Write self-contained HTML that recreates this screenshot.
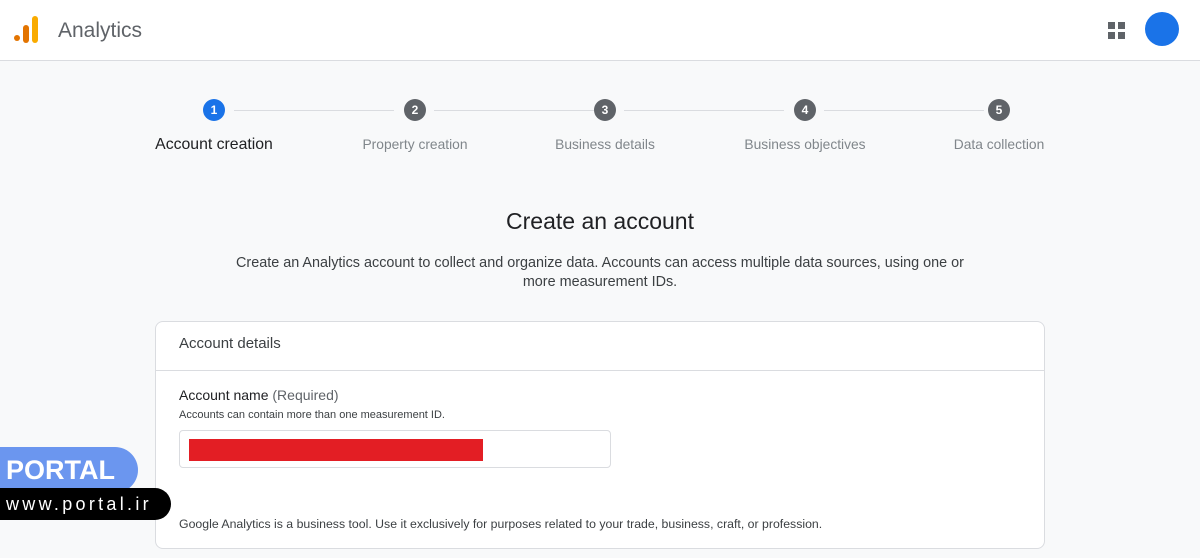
<!DOCTYPE html><html><head><style>
body{margin:0;width:1200px;height:558px;background:#f8f9fa;font-family:"Liberation Sans",Arial,sans-serif;position:relative;overflow:hidden;color:#3c4043}
.hdr{position:absolute;left:0;top:0;width:1200px;height:60px;background:#fff;border-bottom:1px solid #dadce0}
.a{position:absolute}
.step{position:absolute;top:99px;width:22px;height:22px;border-radius:50%;background:#5f6368;color:#fff;font-size:12px;text-align:center;line-height:22px;font-weight:bold}
.lbl{position:absolute;top:137px;font-size:14px;color:#80868b;white-space:nowrap;transform:translateX(-50%)}
.line{position:absolute;top:110px;height:1px;background:#dadce0}
</style></head><body>
<div class="hdr">
<div class="a" style="left:14px;top:35px;width:6px;height:6px;border-radius:50%;background:#e37400"></div>
<div class="a" style="left:23px;top:25px;width:6px;height:18px;border-radius:3px;background:#e37400"></div>
<div class="a" style="left:32px;top:16px;width:6px;height:27px;border-radius:3px;background:#f9ab00"></div>
<div class="a" style="left:58px;top:19px;font-size:21px;color:#5f6368">Analytics</div>
<div class="a" style="left:1108px;top:22px;width:7px;height:7px;background:#5f6368"></div>
<div class="a" style="left:1118px;top:22px;width:7px;height:7px;background:#5f6368"></div>
<div class="a" style="left:1108px;top:32px;width:7px;height:7px;background:#5f6368"></div>
<div class="a" style="left:1118px;top:32px;width:7px;height:7px;background:#5f6368"></div>
<div class="a" style="left:1145px;top:12px;width:34px;height:34px;border-radius:50%;background:#1a73e8"></div>
</div>
<div class="line" style="left:234px;width:160px"></div>
<div class="line" style="left:434px;width:160px"></div>
<div class="line" style="left:624px;width:160px"></div>
<div class="line" style="left:824px;width:160px"></div>
<div class="step" style="left:203px;background:#1a73e8">1</div>
<div class="step" style="left:404px">2</div>
<div class="step" style="left:594px">3</div>
<div class="step" style="left:794px">4</div>
<div class="step" style="left:988px">5</div>
<div class="lbl" style="left:214px;top:136px;color:#202124;font-size:15.8px;font-weight:500">Account creation</div>
<div class="lbl" style="left:415px;font-size:13.8px">Property creation</div>
<div class="lbl" style="left:605px;font-size:13.8px">Business details</div>
<div class="lbl" style="left:805px;font-size:13.8px">Business objectives</div>
<div class="lbl" style="left:999px;font-size:13.8px">Data collection</div>
<div class="a" style="left:0;width:1200px;top:208px;text-align:center;font-size:23px;color:#202124">Create an account</div>
<div class="a" style="left:220px;width:760px;top:254px;text-align:center;font-size:14.4px;line-height:19px;color:#3c4043">Create an Analytics account to collect and organize data. Accounts can access multiple data sources, using one or<br>more measurement IDs.</div>
<div class="a" style="left:155px;top:321px;width:888px;height:226px;background:#fff;border:1px solid #dadce0;border-radius:8px">
<div class="a" style="left:23px;top:13px;font-size:15px;color:#3c4043">Account details</div>
<div class="a" style="left:0;top:48px;width:888px;height:1px;background:#dadce0"></div>
<div class="a" style="left:23px;top:65px;font-size:14px;color:#202124">Account name <span style="color:#5f6368">(Required)</span></div>
<div class="a" style="left:23px;top:87px;font-size:11px;color:#3c4043">Accounts can contain more than one measurement ID.</div>
<div class="a" style="left:23px;top:108px;width:430px;height:36px;border:1px solid #dadce0;border-radius:4px">
<div class="a" style="left:9px;top:8px;width:294px;height:22px;background:#e31e24"></div></div>
<div class="a" style="left:23px;top:195px;font-size:12.3px;color:#3c4043">Google Analytics is a business tool. Use it exclusively for purposes related to your trade, business, craft, or profession.</div>
</div>
<div class="a" style="left:0;top:447px;width:138px;height:46px;background:#6b96ef;border-radius:0 23px 23px 0;color:#fff;font-weight:bold;font-size:27px;line-height:46px;padding-left:6px;box-sizing:border-box">PORTAL</div>
<div class="a" style="left:0;top:488px;width:171px;height:32px;background:#000;border-radius:0 16px 16px 0;color:#fff;font-size:18px;letter-spacing:3.3px;line-height:32px;padding-left:6px;box-sizing:border-box">www.portal.ir</div>
</body></html>
